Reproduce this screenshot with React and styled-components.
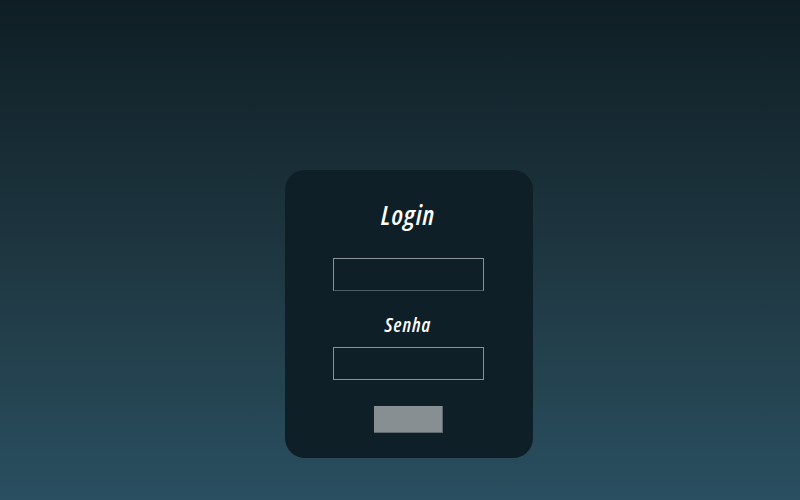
import React from "react";
import styled, { createGlobalStyle } from "styled-components";

const Global = createGlobalStyle`
  html, body { margin: 0; padding: 0; }
  body {
    width: 800px;
    height: 500px;
    background: linear-gradient(to bottom, #0f1e25 0%, #1e3640 50%, #2a4f60 100%);
    font-family: "Open Sans", sans-serif;
  }
`;

const Page = styled.div`
  width: 800px;
  height: 500px;
  display: flex;
  justify-content: center;
  padding: 170px 0 0 18px;
  box-sizing: border-box;
`;

const Card = styled.form`
  width: 248px;
  height: 288px;
  box-sizing: border-box;
  background: #0f1f27;
  border-radius: 20px;
  display: flex;
  flex-direction: column;
  align-items: center;
  padding: 28px 2px 0 0;
`;

const Title = styled.h1`
  margin: 0;
  color: #ffffff;
  font-family: "Open Sans", sans-serif;
  font-style: italic;
  font-weight: 600;
  font-stretch: 75%;
  font-size: 27px;
  letter-spacing: 1px;
  line-height: 34px;
  height: 34px;
`;

const Label = styled.label`
  color: #ffffff;
  font-family: "Open Sans", sans-serif;
  font-style: italic;
  font-weight: 600;
  font-stretch: 75%;
  font-size: 20px;
  letter-spacing: 1px;
  line-height: 28px;
  margin-top: ${(p) => p.$top}px;
`;

const Field = styled.input`
  width: 151px;
  height: 33px;
  box-sizing: border-box;
  background: transparent;
  border: 1px solid #8a9297;
  border-bottom-color: ${(p) => (p.$dim ? "#4d5b62" : "#8a9297")};
  margin: ${(p) => p.$top}px 0 0 0;
  padding: 0;
  outline: none;
`;

const Button = styled.button`
  width: 69px;
  height: 27px;
  margin-top: 26px;
  background: #878f93;
  border: none;
  border-right: 1px solid #5f686d;
  border-bottom: 1px solid #5f686d;
  box-sizing: border-box;
  padding: 0;
`;

export default function App() {
  return (
    <>
      <Global />
      <Page>
        <Card onSubmit={(e) => e.preventDefault()}>
          <Title>Login</Title>
          <Field $top={26} $dim type="text" />
          <Label $top={20}>Senha</Label>
          <Field $top={8} type="password" />
          <Button type="submit" />
        </Card>
      </Page>
    </>
  );
}
